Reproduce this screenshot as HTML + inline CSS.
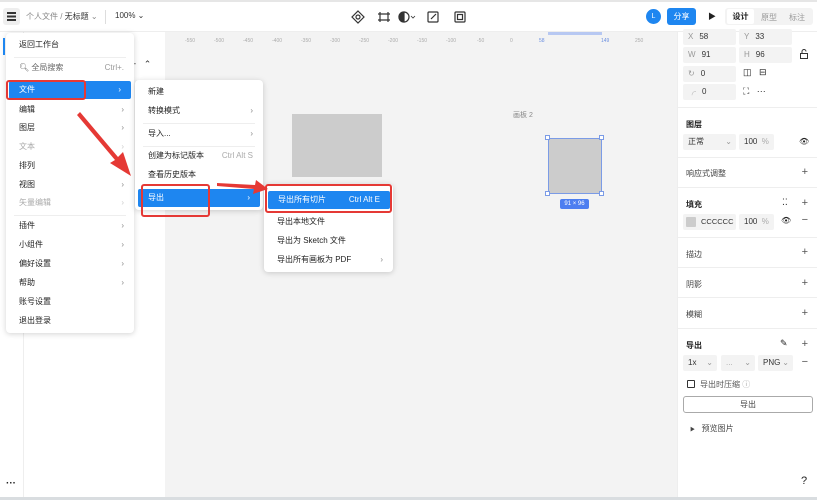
<!DOCTYPE html>
<html><head><meta charset="utf-8"><style>
*{box-sizing:border-box;margin:0;padding:0}
body{width:817px;height:500px;overflow:hidden;position:relative;background:#fff;font-family:"Liberation Sans","Noto Sans CJK SC",sans-serif;font-size:8px;color:#222}
.a{position:absolute}
.t{position:absolute;white-space:nowrap}
.menu{position:absolute;background:#fff;border-radius:4px;box-shadow:0 1px 6px rgba(0,0,0,.18)}
.it{position:absolute;left:0;right:0;height:18px;line-height:18px;padding-left:13px;white-space:nowrap}
.it .ar{position:absolute;right:10px;color:#888}
.hl{background:#1e86f0;color:#fff;border-radius:2px}
.hl .ar{color:#fff}
.red{position:absolute;border:2px solid #e53935;border-radius:3px}
.sep{position:absolute;height:1px;background:#eee}
.gray{color:#aaa}
.inp{position:absolute;background:#f3f3f3;border-radius:2px;height:16px;line-height:16px;padding-left:5px;color:#333;white-space:nowrap;overflow:hidden}
.inp b{font-weight:normal;color:#999;margin-right:6px}
.plus{position:absolute;right:9px;font-size:11px;color:#555}
.rs{position:absolute;left:677px;right:0;height:1px;background:#eee}
</style></head><body>
<div class="a" style="left:0;top:0;width:817px;height:2px;background:#e6e6e6"></div>
<div class="a" style="left:3px;top:8px;width:17px;height:17px;background:#eee;border-radius:3px"></div>
<div class="a" style="left:7px;top:12px;width:9px;height:1.5px;background:#333;box-shadow:0 3.5px #333,0 7px #333"></div>
<div class="t" style="left:26px;top:11px;color:#888">个人文件 / <span style="color:#333">无标题</span> ⌄</div>
<div class="a" style="left:105px;top:10px;width:1px;height:14px;background:#ddd"></div>
<div class="t" style="left:115px;top:11px;color:#333">100% ⌄</div>
<svg class="a" style="left:350px;top:9px" width="130" height="16" viewBox="0 0 130 16" fill="none" stroke="#333" stroke-width="1.2">
<path d="M8 2 L14 8 L8 14 L2 8Z"/><circle cx="8" cy="8" r="2"/>
<path d="M30 3v10M38 3v10M28 5h12M28 11h12"/>
<circle cx="54" cy="8" r="5"/><path d="M54 3a5 5 0 0 0 0 10z" fill="#333"/><path d="M61 7l2 2 2-2" stroke-width="0.8"/>
<rect x="78" y="3" width="10" height="10" rx="1"/><path d="M81 10l5-5"/>
<rect x="105" y="3" width="10" height="10" rx="1"/><rect x="107.5" y="5.5" width="5" height="5"/>
</svg>
<div class="a" style="left:646px;top:9px;width:15px;height:15px;border-radius:50%;background:#1e86f0;color:#fff;font-size:7px;text-align:center;line-height:15px">L</div>
<div class="a" style="left:667px;top:8px;width:29px;height:17px;border-radius:3px;background:#1e86f0;color:#fff;text-align:center;line-height:17px">分享</div>
<div class="t" style="left:708px;top:11px;font-size:8px">▶</div>
<div class="a" style="left:725px;top:8px;width:88px;height:17px;background:#f3f3f3;border-radius:3px"></div>
<div class="a" style="left:727px;top:9px;width:27px;height:15px;background:#fff;border-radius:2px;text-align:center;line-height:15px;font-weight:bold">设计</div>
<div class="t" style="left:761px;top:12px;color:#999">原型</div>
<div class="t" style="left:789px;top:12px;color:#999">标注</div>
<div class="a" style="left:0;top:31px;width:817px;height:1px;background:#eee"></div>

<div class="a" style="left:23px;top:32px;width:1px;height:465px;background:#eee"></div>
<div class="t" style="left:131px;top:59px;color:#333;font-size:9px">+&nbsp;&nbsp;&nbsp;⌃</div>
<div class="t" style="left:6px;top:478px;font-size:10px;font-weight:bold">···</div>

<div class="a" style="left:165px;top:32px;width:512px;height:465px;background:#f3f3f3"></div>
<div class="a" style="left:165px;top:32px;width:512px;height:14px;font-size:5px;color:#aaa">
<span class="t" style="left:20px;top:6px">-550</span><span class="t" style="left:49px;top:6px">-500</span><span class="t" style="left:78px;top:6px">-450</span><span class="t" style="left:107px;top:6px">-400</span><span class="t" style="left:136px;top:6px">-350</span><span class="t" style="left:165px;top:6px">-300</span><span class="t" style="left:194px;top:6px">-250</span><span class="t" style="left:223px;top:6px">-200</span><span class="t" style="left:252px;top:6px">-150</span><span class="t" style="left:281px;top:6px">-100</span><span class="t" style="left:312px;top:6px">-50</span><span class="t" style="left:345px;top:6px">0</span><span class="t" style="left:374px;top:6px;color:#6b8fe0">58</span><span class="t" style="left:436px;top:6px;color:#6b8fe0">149</span><span class="t" style="left:470px;top:6px">250</span>
<div class="a" style="left:383px;top:0;width:54px;height:3px;background:#b7c8f2"></div>
</div>
<div class="a" style="left:292px;top:114px;width:90px;height:63px;background:#cccccc"></div>
<div class="t" style="left:513px;top:110px;color:#888;font-size:7px">画板 2</div>
<div class="a" style="left:548px;top:138px;width:54px;height:56px;background:#cccccc;border:1px solid #7b9be6"></div>
<div class="a" style="left:545px;top:135px;width:5px;height:5px;background:#fff;border:1px solid #7b9be6"></div>
<div class="a" style="left:599px;top:135px;width:5px;height:5px;background:#fff;border:1px solid #7b9be6"></div>
<div class="a" style="left:545px;top:191px;width:5px;height:5px;background:#fff;border:1px solid #7b9be6"></div>
<div class="a" style="left:599px;top:191px;width:5px;height:5px;background:#fff;border:1px solid #7b9be6"></div>
<div class="a" style="left:560px;top:199px;width:29px;height:10px;background:#4d7ef0;color:#fff;font-size:6px;text-align:center;line-height:10px;border-radius:2px">91 × 96</div>

<div class="a" style="left:677px;top:32px;width:1px;height:465px;background:#eee"></div>
<div class="inp" style="left:683px;top:29px;width:53px"><b>X</b>58</div>
<div class="inp" style="left:739px;top:29px;width:53px"><b>Y</b>33</div>
<div class="inp" style="left:683px;top:47px;width:53px"><b>W</b>91</div>
<div class="inp" style="left:739px;top:47px;width:53px"><b>H</b>96</div>
<svg class="a" style="left:799px;top:48px" width="10" height="12" fill="none" stroke="#333" stroke-width="1"><rect x="1.5" y="5.5" width="7" height="5"/><path d="M3 5.5V3.5a2 2 0 0 1 4 0"/></svg>
<div class="inp" style="left:683px;top:66px;width:53px"><b>↻</b>0</div>
<div class="t" style="left:743px;top:67px;font-size:9px">◫&nbsp;&nbsp;&nbsp;⊟</div>
<div class="inp" style="left:683px;top:84px;width:53px"><b>╭</b>0</div>
<div class="t" style="left:743px;top:86px;font-size:9px">⛶&nbsp;&nbsp;&nbsp;···</div>
<div class="rs" style="top:107px"></div>
<div class="t" style="left:686px;top:119px;font-weight:bold">图层</div>
<div class="inp" style="left:683px;top:134px;width:53px">正常<span style="position:absolute;right:4px;color:#999">⌄</span></div>
<div class="inp" style="left:739px;top:134px;width:35px">100 <span style="color:#aaa">&nbsp;%</span></div>
<div class="t" style="left:799px;top:137px">👁︎</div>
<div class="rs" style="top:157px"></div>
<div class="t" style="left:686px;top:168px;color:#444">响应式调整</div><div class="plus" style="top:166px">+</div>
<div class="rs" style="top:187px"></div>
<div class="t" style="left:686px;top:199px;font-weight:bold">填充</div><div class="t" style="left:782px;top:197px;font-size:9px">⁚⁚</div><div class="plus" style="top:197px">+</div>
<div class="inp" style="left:683px;top:214px;width:53px;padding-left:3px;font-size:7.5px"><span style="display:inline-block;width:10px;height:10px;background:#ccc;vertical-align:middle;margin-right:5px;border-radius:1px"></span>CCCCCC</div>
<div class="inp" style="left:739px;top:214px;width:35px">100 <span style="color:#aaa">&nbsp;%</span></div>
<div class="t" style="left:781px;top:216px">👁︎</div><div class="plus" style="top:214px">−</div>
<div class="rs" style="top:237px"></div>
<div class="t" style="left:686px;top:249px;color:#444">描边</div><div class="plus" style="top:246px">+</div>
<div class="rs" style="top:267px"></div>
<div class="t" style="left:686px;top:279px;color:#444">阴影</div><div class="plus" style="top:277px">+</div>
<div class="rs" style="top:297px"></div>
<div class="t" style="left:686px;top:309px;color:#444">模糊</div><div class="plus" style="top:307px">+</div>
<div class="rs" style="top:328px"></div>
<div class="t" style="left:686px;top:340px;font-weight:bold">导出</div><div class="t" style="left:780px;top:338px;font-size:9px">✎</div><div class="plus" style="top:338px">+</div>
<div class="inp" style="left:683px;top:355px;width:34px">1x<span style="position:absolute;right:4px;color:#999">⌄</span></div>
<div class="inp" style="left:721px;top:355px;width:34px;color:#aaa">...<span style="position:absolute;right:4px;color:#999">⌄</span></div>
<div class="inp" style="left:758px;top:355px;width:35px">PNG<span style="position:absolute;right:4px;color:#999">⌄</span></div>
<div class="plus" style="top:356px">−</div>
<div class="a" style="left:687px;top:380px;width:8px;height:8px;border:1px solid #333;border-radius:1px"></div>
<div class="t" style="left:700px;top:379px;color:#555">导出时压缩 <span style="color:#aaa">ⓘ</span></div>
<div class="a" style="left:683px;top:396px;width:130px;height:17px;border:1px solid #aaa;border-radius:3px;text-align:center;line-height:15px;color:#444">导出</div>
<div class="t" style="left:690px;top:423px;color:#444"><span style="font-size:5px">▶</span>&nbsp;&nbsp;&nbsp;预览图片</div>
<div class="t" style="left:801px;top:475px;font-size:11px">?</div>
<div class="a" style="left:0;top:497px;width:817px;height:3px;background:#d9dde0"></div>

<div class="menu" style="left:6px;top:33px;width:128px;height:300px">
<div class="a" style="left:-3px;top:5px;width:2px;height:17px;background:#1e86f0"></div>
<div class="it" style="top:3px">返回工作台</div>
<div class="sep" style="left:8px;right:8px;top:24px"></div>
<div class="it" style="top:26px;color:#666">🔍︎ 全局搜索<span class="ar" style="color:#999">Ctrl+.</span></div>
<div class="it hl" style="top:48px;left:3px;right:3px;padding-left:10px">文件<span class="ar">›</span></div>
<div class="it" style="top:68px">编辑<span class="ar">›</span></div>
<div class="it" style="top:86px">图层<span class="ar">›</span></div>
<div class="it gray" style="top:105px">文本<span class="ar" style="color:#ccc">›</span></div>
<div class="it" style="top:124px">排列</div>
<div class="it" style="top:143px">视图<span class="ar">›</span></div>
<div class="it gray" style="top:161px">矢量编辑<span class="ar" style="color:#ccc">›</span></div>
<div class="sep" style="left:8px;right:8px;top:182px"></div>
<div class="it" style="top:184px">插件<span class="ar">›</span></div>
<div class="it" style="top:203px">小组件<span class="ar">›</span></div>
<div class="it" style="top:222px">偏好设置<span class="ar">›</span></div>
<div class="it" style="top:241px">帮助<span class="ar">›</span></div>
<div class="it" style="top:260px">账号设置</div>
<div class="it" style="top:279px">退出登录</div>
</div>
<div class="menu" style="left:135px;top:80px;width:128px;height:130px">
<div class="it" style="top:3px">新建</div>
<div class="it" style="top:22px">转换模式<span class="ar">›</span></div>
<div class="sep" style="left:8px;right:8px;top:43px"></div>
<div class="it" style="top:45px">导入...<span class="ar">›</span></div>
<div class="sep" style="left:8px;right:8px;top:66px"></div>
<div class="it" style="top:67px">创建为标记版本<span class="ar" style="color:#aaa">Ctrl Alt S</span></div>
<div class="it" style="top:86px">查看历史版本</div>
<div class="it hl" style="top:109px;left:3px;right:3px;padding-left:10px">导出<span class="ar">›</span></div>
</div>
<div class="menu" style="left:264px;top:184px;width:129px;height:88px">
<div class="it hl" style="top:7px;left:4px;right:3px;padding-left:10px">导出所有切片<span class="ar">Ctrl Alt E</span></div>
<div class="it" style="top:29px">导出本地文件</div>
<div class="it" style="top:48px">导出为 Sketch 文件</div>
<div class="it" style="top:67px">导出所有画板为 PDF<span class="ar">›</span></div>
</div>
<div class="red" style="left:6px;top:80px;width:80px;height:20px"></div>
<div class="red" style="left:141px;top:184px;width:69px;height:33px"></div>
<div class="red" style="left:265px;top:184px;width:127px;height:29px"></div>
<svg class="a" style="left:0;top:0" width="817" height="500">
<path d="M77 115 L80 112 L118 157 L123 152 L131 176 L110 163 L115 160 Z" fill="#e53935"/>
<path d="M217 183 L217 186 L254 189 L253 194 L268 189 L256 180 L255 185 Z" fill="#e53935"/>
</svg>
</body></html>
